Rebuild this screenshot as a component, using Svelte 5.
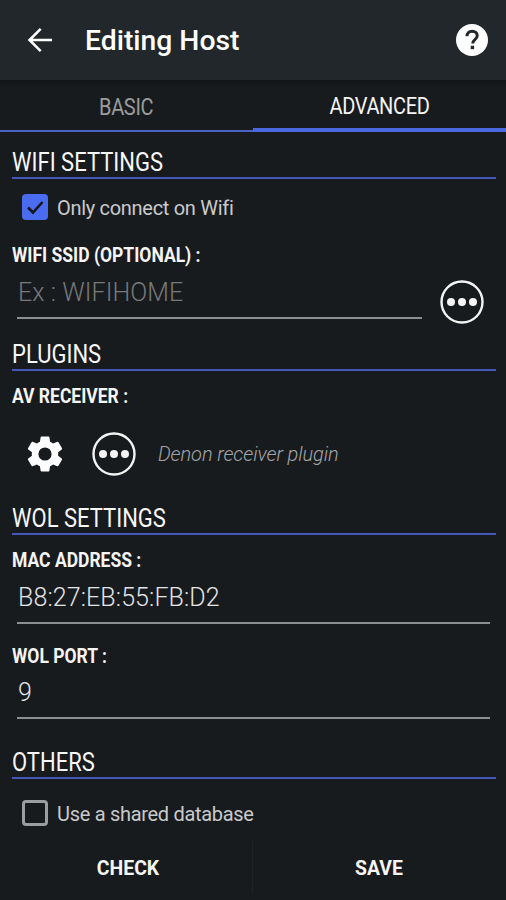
<script>
  // Host editor, advanced tab
  let onlyWifi = $state(true);
  let sharedDb = $state(false);
</script>

{#snippet more()}
  <svg class="more" viewBox="0 0 44 44" aria-hidden="true">
    <circle cx="22" cy="22" r="20.5" fill="none" stroke="#f4f4f4" stroke-width="2.4" />
    <circle cx="11" cy="22" r="4" fill="#f4f4f4" />
    <circle cx="22" cy="22" r="4" fill="#f4f4f4" />
    <circle cx="33" cy="22" r="4" fill="#f4f4f4" />
  </svg>
{/snippet}

{#snippet section(title)}
  <div class="section"><span>{title}</span></div>
{/snippet}

<div class="screen">
  <header class="topbar">
    <svg class="back" viewBox="0 0 24 24" aria-hidden="true">
      <path d="M22.3 12H3.4M12.6 2.4 3 12l9.6 9.6" fill="none" stroke="#fff" stroke-width="2.2" />
    </svg>
    <h1>Editing Host</h1>
    <svg class="help" viewBox="0 0 30 30" aria-hidden="true">
      <circle cx="15" cy="15" r="15" fill="#fff" />
      <path d="M10.3 11.5c0-2.9 2-4.8 4.8-4.8s4.8 1.8 4.8 4.2c0 3.4-4.2 3.5-4.2 7.4" fill="none" stroke="#22272b" stroke-width="2.8" />
      <rect x="13.8" y="20.4" width="3.2" height="3.2" fill="#22272b" />
    </svg>
  </header>

  <nav class="tabs">
    <button class="tab"><span>BASIC</span></button>
    <button class="tab active"><span>ADVANCED</span></button>
  </nav>

  <main class="content">
    {@render section('WIFI SETTINGS')}
    <button class="check-row wifi" onclick={() => (onlyWifi = !onlyWifi)}>
      <span class="box" class:on={onlyWifi}>
        {#if onlyWifi}
          <svg viewBox="0 0 26 26" aria-hidden="true"><path d="M6 13.5l5 5 9.5-10.5" fill="none" stroke="#14171b" stroke-width="2.6" /></svg>
        {/if}
      </span>
      <span class="check-text">Only connect on Wifi</span>
    </button>

    <div class="label ssid-label">WIFI SSID (OPTIONAL) :</div>
    <div class="ssid-row">
      <div class="field placeholder">Ex : WIFIHOME</div>
      {@render more()}
    </div>

    {@render section('PLUGINS')}
    <div class="label av-label">AV RECEIVER :</div>
    <div class="plugin-row">
      <svg class="gear" viewBox="0 0 24 24" aria-hidden="true">
        <path fill="#fff" d="M19.14 12.94c.04-.3.06-.61.06-.94 0-.32-.02-.64-.07-.94l2.03-1.58a.49.49 0 0 0 .12-.61l-1.92-3.32a.49.49 0 0 0-.59-.22l-2.39.96c-.5-.38-1.03-.7-1.62-.94l-.36-2.54a.48.48 0 0 0-.48-.41h-3.84a.48.48 0 0 0-.47.41l-.36 2.54c-.59.24-1.13.57-1.62.94l-2.39-.96a.48.48 0 0 0-.59.22L2.74 8.87a.47.47 0 0 0 .12.61l2.03 1.58c-.05.3-.09.63-.09.94s.02.64.07.94l-2.03 1.58a.49.49 0 0 0-.12.61l1.92 3.32c.12.22.37.29.59.22l2.39-.96c.5.38 1.03.7 1.62.94l.36 2.54c.05.24.24.41.48.41h3.84c.24 0 .44-.17.47-.41l.36-2.54c.59-.24 1.13-.56 1.62-.94l2.39.96c.22.08.47 0 .59-.22l1.92-3.32a.47.47 0 0 0-.12-.61l-2.01-1.58zM12 15.6A3.6 3.6 0 1 1 12 8.4a3.6 3.6 0 0 1 0 7.2z" />
      </svg>
      {@render more()}
      <span class="plugin-name">Denon receiver plugin</span>
    </div>

    {@render section('WOL SETTINGS')}
    <div class="label mac-label">MAC ADDRESS :</div>
    <div class="field value mac">B8:27:EB:55:FB:D2</div>
    <div class="label port-label">WOL PORT :</div>
    <div class="field value port">9</div>

    {@render section('OTHERS')}
    <button class="check-row shared" onclick={() => (sharedDb = !sharedDb)}>
      <span class="box" class:on={sharedDb}></span>
      <span class="check-text">Use a shared database</span>
    </button>
  </main>

  <footer class="actions">
    <button>CHECK</button>
    <span class="divider"></span>
    <button>SAVE</button>
  </footer>
</div>

<style>
  :global(body) {
    margin: 0;
    background: #181b1e;
  }
  .screen {
    width: 506px;
    height: 900px;
    display: flex;
    flex-direction: column;
    background: #181b1e;
    color: #f5f5f5;
    font-family: Roboto, "Liberation Sans", sans-serif;
    overflow: hidden;
  }
  button {
    background: none;
    border: 0;
    padding: 0;
    color: inherit;
    font: inherit;
  }

  .topbar {
    flex: 0 0 80px;
    display: flex;
    align-items: center;
    padding: 0 18px 0 26px;
    background: #21272b;
    box-sizing: border-box;
  }
  .back {
    width: 28px;
    height: 28px;
  }
  h1 {
    margin: 0 0 0 31px;
    flex: 1;
    font-size: 28.3px;
    font-weight: 500;
    color: #fff;
  }
  .help {
    width: 32px;
    height: 32px;
  }

  .tabs {
    flex: 0 0 52px;
    display: flex;
    background: linear-gradient(#121518, #181b1e 8px);
  }
  .tab {
    width: 50%;
    height: 52px;
    box-sizing: border-box;
    padding-top: 4px;
    border-bottom: 2px solid #4a62c4;
    font-size: 23px;
    color: #9a9c9e;
    letter-spacing: -0.4px;
  }
  .tab span {
    display: inline-block;
    transform: scaleX(0.87);
  }
  .tab.active {
    border-bottom-width: 4px;
    border-bottom-color: #4a68e0;
    color: #f5f5f5;
  }

  .content {
    flex: 1;
    min-height: 0;
    padding: 0 10px 0 12px;
    overflow: hidden;
  }
  /* No condensed Roboto on the box, so the caps are squeezed horizontally */
  .section {
    height: 33px;
    box-sizing: border-box;
    margin-top: 14px;
    border-bottom: 2px solid #4358b8;
    font-size: 25px;
    line-height: 34px;
    color: #f7f7f7;
  }
  .section span {
    display: inline-block;
    transform: scaleX(0.88);
    transform-origin: left;
    white-space: nowrap;
  }
  .check-row {
    display: flex;
    align-items: center;
    gap: 9px;
    height: 26px;
    font-size: 20px;
    color: #c9cacb;
    letter-spacing: -0.3px;
    margin-left: 10px;
  }
  .check-text {
    margin-top: 2px;
  }
  .wifi {
    margin-top: 15px;
  }
  .shared {
    margin-top: 21px;
  }
  .box {
    width: 26px;
    height: 26px;
    box-sizing: border-box;
    border: 3px solid #9b9d9f;
    border-radius: 4px;
  }
  .box.on {
    background: #4a6cf0;
    border: 0;
  }
  .box svg {
    display: block;
  }
  .label {
    font-size: 20px;
    font-weight: 700;
    line-height: 22px;
    color: #f5f5f5;
    white-space: nowrap;
    transform: scaleX(0.875);
    transform-origin: left;
  }
  .ssid-label {
    margin-top: 24px;
  }
  .ssid-row {
    display: flex;
    align-items: flex-start;
    margin: 14px 0 0 5px;
    height: 44px;
  }
  .ssid-row .field {
    width: 405px;
    margin: 1px 18px 0 0;
  }
  .more {
    width: 44px;
    height: 44px;
    flex: none;
  }
  .field {
    height: 38px;
    box-sizing: border-box;
    margin-left: 5px;
    padding-left: 1px;
    width: 473px;
    border-bottom: 2px solid #8c8e90;
    font-size: 25px;
    line-height: 24px;
    letter-spacing: 0.1px;
    color: #e4e4e5;
    font-weight: 300;
  }
  .placeholder {
    color: #77797b;
  }
  .av-label {
    margin-top: 14px;
  }
  .plugin-row {
    display: flex;
    align-items: center;
    height: 44px;
    margin: 25px 0 0 11px;
  }
  .gear {
    width: 44px;
    height: 44px;
    margin-right: 25px;
    flex: none;
  }
  .plugin-name {
    margin-left: 22px;
    font-size: 20px;
    font-style: italic;
    font-weight: 300;
    color: #a3a5a7;
    letter-spacing: -0.1px;
  }
  .plugin-row + .section {
    margin-top: 26px;
  }
  .mac-label {
    margin-top: 14px;
  }
  .mac {
    margin-top: 15px;
  }
  .port-label {
    margin-top: 21px;
  }
  .port {
    margin-top: 14px;
  }
  .port + .section {
    margin-top: 27px;
  }

  .actions {
    flex: 0 0 66px;
    display: flex;
    align-items: center;
  }
  .actions button {
    width: 50%;
    height: 100%;
    padding-top: 2px;
    font-size: 19.4px;
    font-weight: 700;
    color: #f5f5f5;
    box-sizing: border-box;
  }
  .actions button:first-child {
    padding-left: 3px;
  }
  .actions button:last-child {
    padding-right: 1px;
  }
  .divider {
    width: 1px;
    height: 52px;
    margin-left: -1px;
    background: #1f2327;
  }
</style>
